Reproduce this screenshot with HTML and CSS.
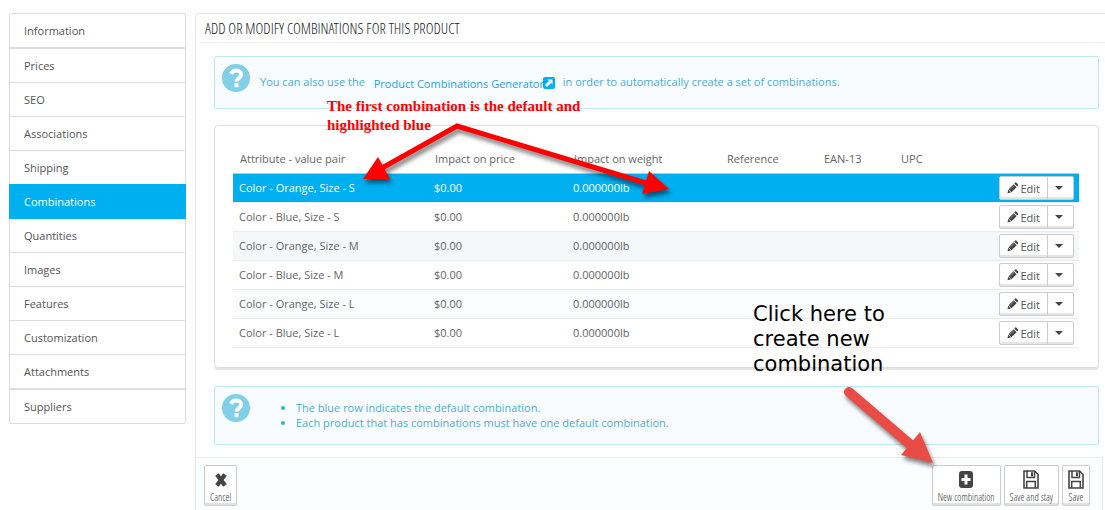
FILE: index.html
```html
<!DOCTYPE html>
<html lang="en">
<head>
<meta charset="utf-8">
<title>Product combinations</title>
<link rel="stylesheet" href="styles.css">
</head>
<body>
<svg class="sprite" aria-hidden="true">
  <symbol id="help" viewBox="0 0 28 28">
    <circle cx="14" cy="14" r="14" fill="#82cfe8"/>
    <path d="M9 9.8C10.2 7.6 12 6.600 14.200 6.600c3 0 5 1.600 5 4 0 3.600-4.500 3.500-4.500 7" fill="none" stroke="#fff" stroke-width="4"/>
    <rect x="12.500" y="18.900" width="4" height="4.300" rx=".5" fill="#fff"/>
  </symbol>
  <symbol id="pencil" viewBox="0 0 12 12">
    <path d="M.5 11.500l.8-3.700 2.900 2.900zM1.600 7.300l5.300-5.300 3.100 3.100-5.300 5.300zM7.600 1.300l.9-.9c.4-.4.9-.4 1.300 0l1.800 1.800c.4.4.4.9 0 1.300l-.9.900z" fill="#444"/>
    <path d="M3.400 7.300l4-4" stroke="#aaa" stroke-width=".7"/>
  </symbol>
  <symbol id="floppy" viewBox="0 0 16 19">
    <path d="M1 1h10.500L15 4.500V18H1z" fill="#fff" stroke="#444" stroke-width="1.600"/>
    <path d="M4 1v6.500h7.500V1M3.700 18v-6.500h8.600V18" fill="none" stroke="#444" stroke-width="1.500"/>
    <path d="M8 2.200h2v4H8z" fill="#444"/>
  </symbol>
</svg>
<div class="page">
  <nav class="tabs" aria-label="Product sections">
    <a class="tab tab-single" href="#">Information</a>
    <div class="tab-group">
      <a class="tab" href="#">Prices</a>
      <a class="tab" href="#">SEO</a>
      <a class="tab" href="#">Associations</a>
      <a class="tab" href="#">Shipping</a>
      <a class="tab active" href="#" aria-current="page">Combinations</a>
      <a class="tab" href="#">Quantities</a>
      <a class="tab" href="#">Images</a>
      <a class="tab" href="#">Features</a>
      <a class="tab" href="#">Customization</a>
      <a class="tab" href="#">Attachments</a>
    </div>
    <a class="tab tab-single tab-last" href="#">Suppliers</a>
  </nav>

  <main class="panel">
    <h1 class="panel-title">Add or modify combinations for this product</h1>
    <div class="panel-body">
      <div class="alert">
        <svg class="help"><use href="#help"/></svg>
        <p class="hint">You can also use the
          <a class="hint-link" href="#">Product Combinations Generator<svg class="ext" viewBox="0 0 12 12"><rect width="12" height="12" rx="2" fill="#00aff0"/><path d="M4.500 2.500h5v5L8 6 4 10 2 8l4-4z" fill="#fff"/></svg></a>
          in order to automatically create a set of combinations.</p>
      </div>

      <section class="card">
        <table class="combos">
          <colgroup><col class="c-attr"><col class="c-price"><col class="c-weight"><col class="c-ref"><col class="c-ean"><col></colgroup>
          <thead>
            <tr><th>Attribute - value pair</th><th>Impact on price</th><th>Impact on weight</th><th>Reference</th><th>EAN-13</th><th colspan="2">UPC</th></tr>
          </thead>
          <tbody>
            <tr class="default"><td>Color - Orange, Size - S</td><td>$0.00</td><td>0.000000lb</td><td></td><td></td><td></td><td class="actions"><span class="split"><button class="edit"><svg class="pencil"><use href="#pencil"/></svg>Edit</button><button class="more" aria-label="More"></button></span></td></tr>
            <tr><td>Color - Blue, Size - S</td><td>$0.00</td><td>0.000000lb</td><td></td><td></td><td></td><td class="actions"><span class="split"><button class="edit"><svg class="pencil"><use href="#pencil"/></svg>Edit</button><button class="more" aria-label="More"></button></span></td></tr>
            <tr class="shade"><td>Color - Orange, Size - M</td><td>$0.00</td><td>0.000000lb</td><td></td><td></td><td></td><td class="actions"><span class="split"><button class="edit"><svg class="pencil"><use href="#pencil"/></svg>Edit</button><button class="more" aria-label="More"></button></span></td></tr>
            <tr><td>Color - Blue, Size - M</td><td>$0.00</td><td>0.000000lb</td><td></td><td></td><td></td><td class="actions"><span class="split"><button class="edit"><svg class="pencil"><use href="#pencil"/></svg>Edit</button><button class="more" aria-label="More"></button></span></td></tr>
            <tr class="odd"><td>Color - Orange, Size - L</td><td>$0.00</td><td>0.000000lb</td><td></td><td></td><td></td><td class="actions"><span class="split"><button class="edit"><svg class="pencil"><use href="#pencil"/></svg>Edit</button><button class="more" aria-label="More"></button></span></td></tr>
            <tr><td>Color - Blue, Size - L</td><td>$0.00</td><td>0.000000lb</td><td></td><td></td><td></td><td class="actions"><span class="split"><button class="edit"><svg class="pencil"><use href="#pencil"/></svg>Edit</button><button class="more" aria-label="More"></button></span></td></tr>
          </tbody>
        </table>
      </section>

      <div class="alert alert-list">
        <svg class="help"><use href="#help"/></svg>
        <ul class="notes">
          <li>The blue row indicates the default combination.</li>
          <li>Each product that has combinations must have one default combination.</li>
        </ul>
      </div>
    </div>

    <footer class="toolbar">
      <button class="tool"><svg class="tool-icon" viewBox="0 0 16 19"><path d="M4 4.500l8 11M12 4.500l-8 11" stroke="#444" stroke-width="4.400"/></svg>Cancel</button>
      <div class="tool-right">
        <button class="tool"><svg class="tool-icon" viewBox="0 0 16 19"><rect x="1" y="1" width="14" height="17" rx="3" fill="#444"/><path d="M8 4.500v10M3.500 9.500h9" stroke="#fff" stroke-width="3"/></svg>New combination</button>
        <button class="tool"><svg class="tool-icon"><use href="#floppy"/></svg>Save and stay</button>
        <button class="tool"><svg class="tool-icon"><use href="#floppy"/></svg>Save</button>
      </div>
    </footer>
  </main>

  <svg class="arrows" width="1105" height="510" aria-hidden="true">
    <g class="arrow-shadow" fill="#f00">
      <path d="M382 168L457 126L646 183" fill="none" stroke="#f00" stroke-width="5"/>
      <path d="M363 179L378 157L390 179z"/>
      <path d="M669 189L649 171L642 194z"/>
    </g>
    <g class="arrow-shadow" fill="#e84c45">
      <path d="M849 392L912 446" stroke="#e84c45" stroke-width="10" stroke-linecap="round"/>
      <path d="M933 463L920 432L901 455z"/>
    </g>
  </svg>
  <p class="note note-default">The first combination is the default and highlighted blue</p>
  <p class="note note-new">Click here to create new combination</p>
</div>
</body>
</html>
```
FILE: styles.css
```css
* { box-sizing: border-box; }
body {
  margin: 0;
  background: #fff;
  color: #666;
  font: 11px/15px "Open Sans", sans-serif;
}
h1, p, ul { margin: 0; padding: 0; }
a { text-decoration: none; }
button { font: inherit; color: inherit; background: #fff; margin: 0; }
.sprite { position: absolute; width: 0; height: 0; }
.page {
  position: relative;
  display: flex;
  align-items: flex-start;
  gap: 9px;
  padding: 13px 0 0 9px;
  overflow: hidden;
}

/* Section tabs */
.tabs { flex: 0 0 177px; }
.tab {
  display: block;
  padding: 9px 14px;
  border: 1px solid #ddd;
  color: #555;
}
.tab-single { border-radius: 2px 2px 0 0; }
.tab-last { border-radius: 0 0 2px 2px; }
.tab-group .tab + .tab { margin-top: -1px; }
.tab-group .active {
  position: relative;
  background: #00aff0;
  border-color: #00aff0;
  color: #fff;
}

/* Main panel */
.panel {
  flex: 1;
  min-width: 0;
  border: 1px solid #e4e4e4;
  border-width: 1px 0 0 1px;
  border-radius: 4px 0 0 0;
}
.panel-title {
  margin-left: 4px;
  padding: 7px 5px 6px;
  border-bottom: 1px solid #eee;
  color: #222;
  font: 300 15px/15px "Open Sans Condensed Light", "Open Sans Condensed", "Roboto Condensed", sans-serif;
  text-transform: uppercase;
}
.panel-body {
  display: flex;
  flex-direction: column;
  gap: 16px;
  padding: 13px 6px 12px 18px;
}
.alert {
  display: flex;
  gap: 10px;
  padding: 7px 7px 16px;
  background: #f8fcff;
  border: 1px solid #bce8f1;
  border-radius: 2px;
  color: #4cadd3;
}
.alert-list { padding-bottom: 14px; }
.help { flex: none; width: 28px; height: 28px; }
.hint { padding-top: 10px; }
.hint-link { position: relative; top: 2px; margin: 0 5px 0 6px; color: #2ba0e8; }
.ext { width: 12px; height: 12px; margin-left: -1px; vertical-align: -1px; }
.notes { padding: 6px 0 0 36px; }
.notes li::marker { color: #2ab0dd; }

/* Combination table */
.card {
  margin-bottom: 2px;
  padding: 20px 19px 19px 18px;
  border: 1px solid #ddd;
  border-radius: 4px;
  box-shadow: 0 2px 0 rgba(0, 0, 0, .1);
}
.combos { width: 100%; border-collapse: separate; border-spacing: 0; }
.c-attr { width: 195px; }
.c-price { width: 139px; }
.c-weight { width: 153px; }
.c-ref { width: 97px; }
.c-ean { width: 77px; }
.combos th {
  height: 28px;
  padding: 0 7px 2px;
  border-bottom: 1px solid #a0d0eb;
  font-weight: 400;
  text-align: left;
}
.combos td {
  height: 29px;
  padding: 0 6px 2px;
  border-bottom: 1px solid #eaedef;
}
.default td { background: #00aff0; color: #fff; }
.shade td { background: #f4f8fb; }
.odd td { background: #fafcfe; }
.combos .actions { padding: 0 5px; text-align: right; }
.split { display: flex; justify-content: flex-end; color: #555; }
.edit, .more {
  height: 24px;
  border: 1px solid #ccc;
  box-shadow: inset 0 -2px 0 #e6e6e6;
}
.edit {
  display: flex;
  align-items: center;
  gap: 2px;
  width: 49px;
  padding: 1px 7px 0;
  border-radius: 2px 0 0 2px;
}
.pencil { width: 12px; height: 12px; margin-bottom: 2px; }
.more {
  display: flex;
  align-items: center;
  justify-content: center;
  width: 27px;
  margin-left: -1px;
  padding: 0 3px 1px 0;
  border-radius: 0 2px 2px 0;
}
.more::before {
  content: "";
  border: 4px solid transparent;
  border-top-color: #444;
  border-bottom: 0;
}

/* Action bar */
.toolbar {
  display: flex;
  justify-content: space-between;
  margin-right: 2px;
  padding: 7px 12px 5px 8px;
  background: #fcfdfe;
  border: 1px solid #eaedef;
  border-width: 1px 1px 0 0;
}
.tool-right { display: flex; gap: 3px; }
.tool {
  display: flex;
  flex-direction: column;
  align-items: center;
  gap: 2px;
  padding: 4px 5px 2px;
  border: 1px solid #ccc;
  border-radius: 2px;
  box-shadow: inset 0 -2px 0 #e2e2e2;
  color: #333;
  font: 300 10px/12px "Open Sans Condensed Light", "Open Sans Condensed", "Roboto Condensed", sans-serif;
}
.tool-icon { width: 16px; height: 19px; }

/* Annotations lying over the page */
.arrows { position: absolute; left: 0; top: 0; pointer-events: none; }
.arrow-shadow { filter: drop-shadow(2px 4px 2px rgba(0, 0, 0, .5)); }
.note { position: absolute; }
.note-default {
  left: 327px;
  top: 97px;
  width: 280px;
  color: #f00;
  font: bold 15px/19px "Liberation Serif", serif;
}
.note-new {
  left: 753px;
  top: 302px;
  width: 150px;
  color: #000;
  font: 21px/25px "DejaVu Sans", sans-serif;
}
```
